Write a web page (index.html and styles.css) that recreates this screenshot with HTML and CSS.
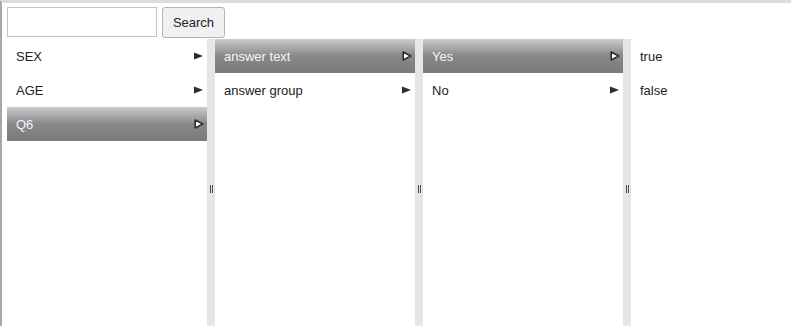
FILE: index.html
```html
<!DOCTYPE html>
<html lang="en">
<head>
  <meta charset="UTF-8" />
  <title>Column Browser</title>
  <link rel="stylesheet" href="styles.css">
</head>
<body>
  <div class="frame">
    <!-- SEARCH -->
    <div class="toolbar">
      <input type="text" class="search-box" />
      <button class="search-btn">Search</button>
    </div>

    <!-- COLUMNS -->
    <div class="browser">
      <div class="column">
        <div class="item">SEX<span class="arrow"></span></div>
        <div class="item">AGE<span class="arrow"></span></div>
        <div class="item selected">Q6<span class="arrow"></span></div>
      </div>
      <div class="splitter"><span class="grip"></span></div>

      <div class="column">
        <div class="item selected">answer text<span class="arrow"></span></div>
        <div class="item">answer group<span class="arrow"></span></div>
      </div>
      <div class="splitter"><span class="grip"></span></div>

      <div class="column">
        <div class="item selected">Yes<span class="arrow"></span></div>
        <div class="item">No<span class="arrow"></span></div>
      </div>
      <div class="splitter"><span class="grip"></span></div>

      <div class="column last">
        <div class="item">true</div>
        <div class="item">false</div>
      </div>
    </div>
  </div>
</body>
</html>
```

FILE: styles.css
```css
html, body {
  margin: 0;
  padding: 0;
  background: #fff;
  overflow: hidden;
}
.frame {
  height: 326px;
  box-sizing: border-box;
  border-top: 3px solid #dcdcdc;
  border-left: 2px solid #a8a8a8;
  font-family: "Liberation Sans", Arial, sans-serif;
  font-size: 13px;
  color: #222;
}
.toolbar {
  display: flex;
  align-items: flex-start;
  gap: 5px;
  padding: 4px 5px 1px 5px;
}
.search-box {
  width: 150px;
  height: 30px;
  box-sizing: border-box;
  margin: 0;
  border: 1px solid #c4c4c4;
  padding: 2px 4px;
  font-family: inherit;
  font-size: 13px;
}
.search-btn {
  height: 31px;
  width: 63px;
  box-sizing: border-box;
  margin: 0;
  padding: 0 8px;
  background: #f0f0f0;
  border: 1px solid #b4b4b4;
  border-radius: 3px;
  font-family: inherit;
  font-size: 13px;
  color: #222;
}
.browser {
  display: flex;
  height: 287px;
  margin-left: 5px;
}
.column {
  width: 200px;
  flex: none;
}
.column.last {
  flex: 1;
}
.item {
  position: relative;
  height: 34px;
  box-sizing: border-box;
  padding: 1px 0 0 9px;
  line-height: 33px;
}
.item.selected {
  background: linear-gradient(#cbcbcb, #888 50%, #7b7b7b);
  color: #f0f8ff;
}
.arrow {
  position: absolute;
  right: 4px;
  top: 13px;
  width: 9px;
  height: 8px;
  background: no-repeat center / 9px 8px url("data:image/svg+xml,%3Csvg xmlns='http://www.w3.org/2000/svg' viewBox='0 0 9 8'%3E%3Cpath d='M0 0.5L9 4L0 7.5Z' fill='%232f2a36'/%3E%3C/svg%3E");
}
.item.selected .arrow {
  background-image: url("data:image/svg+xml,%3Csvg xmlns='http://www.w3.org/2000/svg' viewBox='0 0 10 10'%3E%3Cpath d='M1.2 1L8.8 5L1.2 9Z' fill='%23fff' stroke='%232f2a36' stroke-width='1.6' stroke-linejoin='round'/%3E%3C/svg%3E");
  width: 10px;
  height: 10px;
  background-size: 10px 10px;
  top: 12px;
  right: 3px;
}
.splitter {
  width: 8px;
  flex: none;
  background: #e6e6e6;
  display: flex;
  align-items: center;
  justify-content: center;
  padding-top: 13px;
  box-sizing: border-box;
}
.grip {
  width: 3px;
  height: 8px;
  border-left: 1px solid #4a4a5a;
  border-right: 1px solid #4a4a5a;
  box-sizing: border-box;
}
```
